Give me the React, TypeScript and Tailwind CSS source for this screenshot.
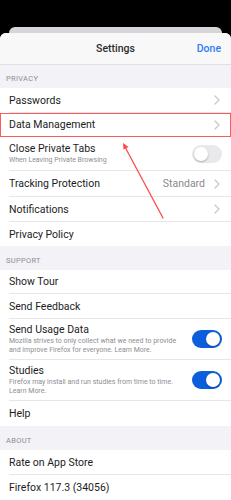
import React from "react";

const Chevron: React.FC = () => (
  <svg width="6" height="10" viewBox="0 0 6 10" className="shrink-0">
    <path d="M1 1l4 4-4 4" fill="none" stroke="#c7c7cc" strokeWidth="1.2" strokeLinecap="round" strokeLinejoin="round" />
  </svg>
);

const Toggle: React.FC<{ on?: boolean }> = ({ on }) => (
  <div
    className={
      on
        ? "w-[30px] h-[18px] rounded-full bg-[#0b5fdc] flex items-center justify-end px-[2px] shrink-0"
        : "w-[30px] h-[18px] rounded-full bg-[#e9e9eb] flex items-center justify-start px-[2px] shrink-0"
    }
  >
    <div className="w-[14px] h-[14px] rounded-full bg-white shadow-[0_1px_2px_rgba(0,0,0,0.25)]" />
  </div>
);

type RowProps = {
  title: string;
  sub?: string;
  detail?: string;
  chevron?: boolean;
  toggle?: "on" | "off";
  h: string;
  last?: boolean;
  highlight?: boolean;
};

const Row: React.FC<RowProps> = ({ title, sub, detail, chevron, toggle, h, last, highlight }) => (
  <div className={`relative bg-white pl-[9px] ${h}`}>
    <div className={`flex items-center h-full pr-[9px] ${last ? "" : "border-b border-[#e5e5ea]"}`}>
      <div className="flex-1 min-w-0">
        <div className="text-[10.5px] leading-[13px] text-[#1c1c1e]">{title}</div>
        {sub && <div className="text-[7px] leading-[9.5px] text-[#8e8e93] mt-[1px] pr-[4px]">{sub}</div>}
      </div>
      {detail && <span className="text-[10.5px] text-[#8a8a8e] mr-[9px]">{detail}</span>}
      {chevron && <div className="mr-[2px]"><Chevron /></div>}
      {toggle && <Toggle on={toggle === "on"} />}
    </div>
    {highlight && <div className="absolute inset-x-0 top-0 bottom-0 border border-[#ff5a5a] pointer-events-none" />}
  </div>
);

const Section: React.FC<{ label: string; h: string }> = ({ label, h }) => (
  <div className={`${h} flex items-end pl-[6px] pb-[4px]`}>
    <span className="text-[7.5px] tracking-[0.3px] text-[#8e8e93]">{label}</span>
  </div>
);

export default function App() {
  return (
    <div
      className="relative w-[231px] h-[500px] overflow-hidden bg-black"
      style={{ fontFamily: 'Roboto, "Liberation Sans", Arial, sans-serif' }}
    >
      <div className="h-[27px]" />
      <div className="mx-[9px] h-[10px] rounded-t-[6px] bg-[#d6d6da]" />
      <div className="-mt-[4px] rounded-t-[6px] bg-[#f2f2f7] h-full">
        <div className="h-[32px] bg-[#f8f8f8] border-b border-[#e0e0e4] rounded-t-[6px] flex items-center justify-center relative">
          <span className="text-[10.5px] font-medium text-[#2c2c2e]">Settings</span>
          <span className="absolute right-[10px] text-[10.5px] font-medium text-[#2d7ef0]">Done</span>
        </div>
        <Section label="PRIVACY" h="h-[23px]" />
        <Row title="Passwords" chevron h="h-[25px]" />
        <Row title="Data Management" chevron h="h-[24px]" highlight />
        <Row title="Close Private Tabs" sub="When Leaving Private Browsing" toggle="off" h="h-[34px]" />
        <Row title="Tracking Protection" detail="Standard" chevron h="h-[26px]" />
        <Row title="Notifications" chevron h="h-[25px]" />
        <Row title="Privacy Policy" h="h-[24px]" last />
        <Section label="SUPPORT" h="h-[24px]" />
        <Row title="Show Tour" h="h-[24px]" />
        <Row title="Send Feedback" h="h-[25px]" />
        <Row
          title="Send Usage Data"
          sub="Mozilla strives to only collect what we need to provide and improve Firefox for everyone. Learn More."
          toggle="on"
          h="h-[41px]"
        />
        <Row
          title="Studies"
          sub="Firefox may install and run studies from time to time. Learn More."
          toggle="on"
          h="h-[41px]"
        />
        <Row title="Help" h="h-[25px]" last />
        <Section label="ABOUT" h="h-[24px]" />
        <Row title="Rate on App Store" h="h-[25px]" />
        <Row title="Firefox 117.3 (34056)" h="h-[25px]" last />
      </div>
      <svg className="absolute left-0 top-0 pointer-events-none" width="231" height="500" viewBox="0 0 231 500">
        <line x1="163" y1="218" x2="125" y2="147" stroke="#ff4a4a" strokeWidth="1.3" strokeLinecap="round" />
        <path d="M123 143l0.5 6.5 5-2.6z" fill="#ff4a4a" />
      </svg>
    </div>
  );
}
